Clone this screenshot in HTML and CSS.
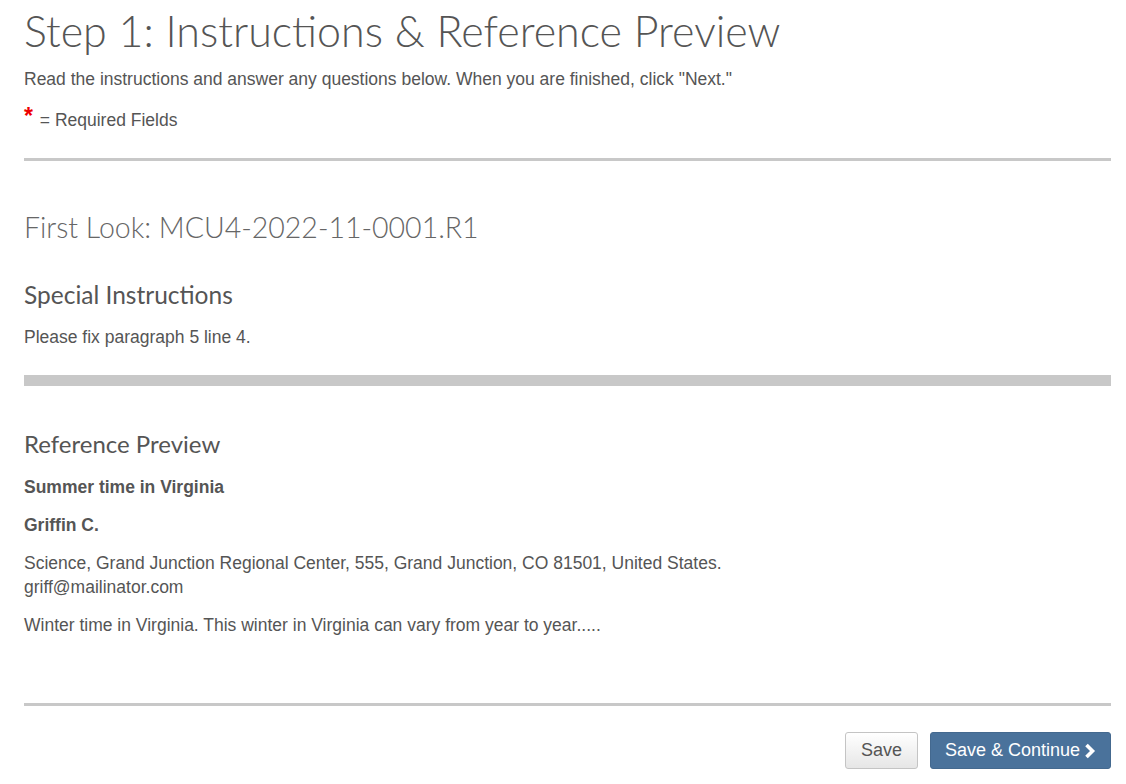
FILE: index.html
```html
<!DOCTYPE html>
<html lang="en">
  <head>
    <meta charset="UTF-8" />
    <meta name="viewport" content="width=device-width, initial-scale=1.0" />
    <title>Step 1: Instructions &amp; Reference Preview</title>
    <link rel="stylesheet" href="styles.css">
  </head>
  <body>
    <div class="step-container">
      <h1>Step 1: Instructions &amp; Reference Preview</h1>
      <p class="intro">Read the instructions and answer any questions below. When you are finished, click "Next."</p>
      <p class="required-note"><span class="required">*</span> = Required Fields</p>

      <hr class="divider" />

      <h2 class="look-title">First Look: MCU4-2022-11-0001.R1</h2>

      <!-- Special instructions -->
      <div class="section">
        <h3>Special Instructions</h3>
        <p>Please fix paragraph 5 line 4.</p>
      </div>

      <hr class="divider thick" />

      <!-- Reference preview -->
      <div class="section preview">
        <h3>Reference Preview</h3>
        <p class="ref-title">Summer time in Virginia</p>
        <p class="ref-author">Griffin C.</p>
        <p class="ref-affil">
          Science, Grand Junction Regional Center, 555, Grand Junction, CO 81501, United States.<br />
          griff@mailinator.com
        </p>
        <p>Winter time in Virginia. This winter in Virginia can vary from year to year.....</p>
      </div>

      <hr class="divider bottom" />

      <div class="actions">
        <button type="button" class="btn btn-default">Save</button>
        <button type="submit" class="btn btn-primary">
          Save &amp; Continue
          <svg class="chevron" width="12" height="16" viewBox="0 0 12 16" aria-hidden="true">
            <path d="M2.5 2 L8.5 8 L2.5 14" fill="none" stroke="#fff" stroke-width="3.6" stroke-linejoin="miter" />
          </svg>
        </button>
      </div>
    </div>
  </body>
</html>
```

FILE: styles.css
```css
* {
  box-sizing: border-box;
  margin: 0;
  padding: 0;
}

body {
  background-color: #fff;
  color: #555;
  font-family: "Liberation Sans", Arial, sans-serif;
  font-size: 17.5px;
  line-height: 24px;
}

.step-container {
  padding: 0 15px 40px 24px;
}

h1 {
  font-family: Lato, "Open Sans", sans-serif;
  font-weight: 300;
  font-size: 43px;
  line-height: 60px;
  color: #555;
  margin-top: 1px;
}

.intro {
  margin-top: 6px;
}

.required-note {
  margin-top: 17px;
}

.required {
  color: #e00;
  font-size: 23px;
  font-weight: bold;
  line-height: 0;
  vertical-align: 2px;
  margin-right: 2px;
}

.divider {
  border: none;
  height: 3px;
  background-color: #c8c8c8;
  margin-top: 26px;
}

.divider.thick {
  height: 11px;
  margin-top: 26px;
}

.look-title {
  font-family: Lato, "Open Sans", sans-serif;
  font-weight: 300;
  font-size: 28.5px;
  line-height: 40px;
  color: #666;
  margin-top: 46px;
}

.section {
  margin-top: 32px;
}

.section h3 {
  font-family: Lato, "Open Sans", sans-serif;
  font-weight: 400;
  font-size: 24.5px;
  line-height: 32px;
  color: #555;
  margin-bottom: 14px;
}

.preview {
  margin-top: 42px;
  padding-bottom: 26px;
}

.preview h3 {
  font-size: 24px;
  margin-bottom: 15px;
}

.preview p {
  margin-bottom: 14px;
}

.ref-title,
.ref-author {
  font-weight: bold;
}

.actions {
  display: flex;
  justify-content: flex-end;
  gap: 12px;
  margin-top: 26px;
}

.btn {
  font-family: "Liberation Sans", Arial, sans-serif;
  font-size: 18px;
  height: 37px;
  padding: 0 15px;
  border-radius: 3px;
  cursor: pointer;
  display: flex;
  align-items: center;
  gap: 4px;
}

.btn-default {
  background: linear-gradient(#fff, #e6e6e6);
  border: 1px solid #c4c4c4;
  color: #555;
}

.btn-primary {
  background-color: #4a729b;
  border: 1px solid #44698f;
  color: #fff;
  padding: 0 14px;
}
```
